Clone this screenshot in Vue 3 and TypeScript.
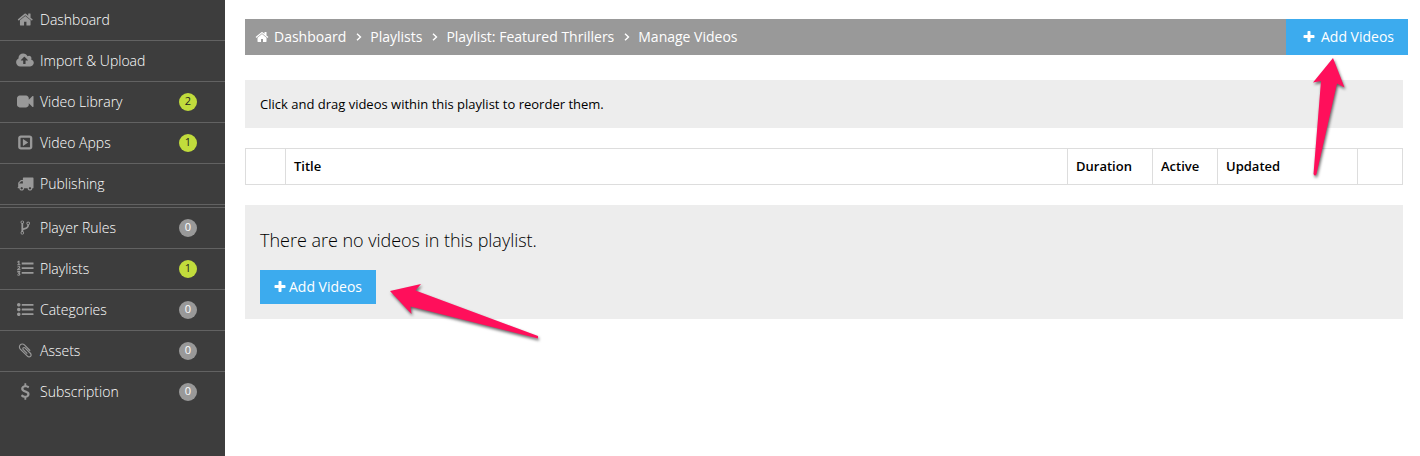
<script setup lang="ts">
type IconName =
  | 'home' | 'cloud' | 'camera' | 'play' | 'truck' | 'fork'
  | 'numbers' | 'list' | 'clip' | 'dollar' | 'plus'

interface NavItem {
  label: string
  icon: IconName
  count?: number
  gapAfter?: boolean
}

const paths: Record<IconName, string> = {
  home: 'M1472 992v480q0 26-19 45t-45 19h-384v-384h-256v384h-384q-26 0-45-19t-19-45v-480q0-1 .5-3t.5-3l575-474 575 474q1 2 1 6zm223-69l-62 74q-8 9-21 11h-3q-13 0-21-7l-692-577-692 577q-12 8-24 7-13-2-21-11l-62-74q-8-10-7-23.5t11-21.5l719-599q32-26 76-26t76 26l244 204v-195q0-14 9-23t23-9h192q14 0 23 9t9 23v408l219 182q10 8 11 21.5t-7 23.5z',
  cloud: 'M1216 864q0-14-9-23l-352-352q-9-9-23-9t-23 9l-351 351q-10 12-10 24 0 14 9 23t23 9h224v352q0 13 9.500 22.500t22.500 9.500h192q13 0 22.500-9.500t9.500-22.500v-352h224q13 0 22.500-9.500t9.500-22.500zm640 288q0 159-112.500 271.500t-271.500 112.500h-1088q-185 0-316.500-131.500t-131.500-316.500q0-130 70-240t188-165q-2-30-2-43 0-212 150-362t362-150q156 0 285.500 87t188.500 231q71-62 166-62 106 0 181 75t75 181q0 76-41 138 130 31 213.500 135.500t83.500 238.500z',
  camera: 'M1792 352v1088q0 42-39 59-13 5-25 5-27 0-45-19l-403-403v166q0 119-84.500 203.500t-203.500 84.500h-704q-119 0-203.500-84.500t-84.500-203.500v-704q0-119 84.500-203.500t203.500-84.500h704q119 0 203.500 84.500t84.500 203.500v165l403-402q18-19 45-19 12 0 25 5 39 17 39 59z',
  play: 'M690 530L1180 860Q1215 896 1180 932L690 1262Q640 1290 640 1230V562Q640 502 690 530zM1408 1376V416q0-32-32-32H416q-32 0-32 32v960q0 32 32 32h960q32 0 32-32zm256-960v960q0 119-84.500 203.500t-203.500 84.500H416q-119 0-203.500-84.500T128 1376V416q0-119 84.500-203.500T416 128h960q119 0 203.500 84.500T1664 416z',
  truck: 'M640 1408q0-52-38-90t-90-38-90 38-38 90 38 90 90 38 90-38 38-90zm-384-512h384v-256h-158q-13 0-22 9l-195 195q-9 9-9 22v30zm1280 512q0-52-38-90t-90-38-90 38-38 90 38 90 90 38 90-38 38-90zm256-1088v1024q0 15-4 26.500t-13.500 18.500-16.500 11.500-23.500 6-22.500 2-25.500 0-22.500-.5q0 106-75 181t-181 75-181-75-75-181h-384q0 106-75 181t-181 75-181-75-75-181h-64q-3 0-22.500.5t-25.500 0-22.500-2-23.500-6-16.500-11.500-13.500-18.500-4-26.500q0-26 19-45t45-19v-320q0-8-.5-35t0-38 2.500-34.500 6.500-37 14-30.500 22.500-30l198-198q19-19 50.500-32t58.500-13h160v-192q0-26 19-45t45-19h1024q26 0 45 19t19 45z',
  fork: 'M672 1472q0-40-28-68t-68-28-68 28-28 68 28 68 68 28 68-28 28-68zm0-1152q0-40-28-68t-68-28-68 28-28 68 28 68 68 28 68-28 28-68zm640 128q0-40-28-68t-68-28-68 28-28 68 28 68 68 28 68-28 28-68zm96 0q0 52-26 96.500t-70 69.500q-2 287-226 414-67 38-203 81-128 40-169.500 71t-41.500 100v26q44 25 70 69.500t26 96.500q0 80-56 136t-136 56-136-56-56-136q0-52 26-96.500t70-69.500v-820q-44-25-70-69.500t-26-96.500q0-80 56-136t136-56 136 56 56 136q0 52-26 96.500t-70 69.500v497q54-26 154-57 55-17 87.500-29.500t70.500-31 59-39.500 40.500-51 28-69.500 8.500-91.500q-44-25-70-69.500t-26-96.500q0-80 56-136t136-56 136 56 56 136z',
  numbers: 'M512 256h1280v192H512zM512 768h1280v192H512zM512 1280h1280v192H512zM10 190L150 60H270V430H370V530H30V430H140V210L70 260zM20 720Q80 620 200 620Q360 620 360 750Q360 830 180 980H270V910H375V1080H10V980Q220 820 230 760Q230 715 185 715Q130 715 90 780zM30 1180H360V1270L270 1380Q375 1410 375 1520Q375 1680 190 1680Q80 1680 5 1610L65 1520Q120 1570 180 1570Q245 1570 245 1515Q245 1450 130 1465L100 1400L190 1280H130V1330H30z',
  list: 'M384 1408q0 80-56 136t-136 56-136-56-56-136 56-136 136-56 136 56 56 136zm0-512q0 80-56 136t-136 56-136-56-56-136 56-136 136-56 136 56 56 136zm0-512q0 80-56 136t-136 56-136-56-56-136 56-136 136-56 136 56 56 136zM544 288h1216q32 0 32 32v128q0 32-32 32H544q-32 0-32-32V320q0-32 32-32zm0 512h1216q32 0 32 32v128q0 32-32 32H544q-32 0-32-32V832q0-32 32-32zm0 512h1216q32 0 32 32v128q0 32-32 32H544q-32 0-32-32v-128q0-32 32-32z',
  clip: 'M1596 1385q0 117-79 196t-196 79q-135 0-235-100l-777-776q-113-115-113-271 0-159 110-270t269-111q158 0 273 113l605 606q10 10 10 22 0 16-30.500 46.500t-46.500 30.500q-13 0-23-10l-606-607q-79-77-181-77-106 0-179 75t-73 181q0 105 76 181l776 777q63 63 145 63 64 0 106-42t42-106q0-82-63-145l-581-581q-26-24-60-24-29 0-48 19t-19 48q0 32 25 59l410 410q10 10 10 22 0 16-31 47t-47 31q-12 0-22-10l-410-410q-63-61-63-149 0-82 57-139t139-57q88 0 149 63l581 581q100 98 100 235z',
  dollar: 'M1362 1185q0 153-99.500 263.500t-258.500 136.500v175q0 14-9 23t-23 9h-135q-13 0-22.500-9.500t-9.500-22.500v-175q-66-9-127.500-31t-101.500-44.500-74-48-46.500-37.500-17.500-18q-17-21-2-41l103-135q7-10 23-12 15-2 24 9l2 2q113 99 243 125 37 8 74 8 81 0 142.500-43t61.500-122q0-28-15-53t-33.500-42-58.500-37.500-66-32-80-32.500q-39-16-61.500-25t-61.500-26.500-62.500-31-56.500-35.500-53.500-42.500-43.500-49-35.500-58-21-66.500-8.500-78q0-138 98-242t255-134v-180q0-13 9.500-22.500t22.500-9.500h135q14 0 23 9t9 23v176q57 6 110.500 23t87 33.500 63.500 37.500 39 29 15 14q17 18 5 38l-81 146q-8 15-23 16-14 3-27-7-3-3-14.500-12t-39-26.500-58.500-32-74.500-26-85.500-11.500q-95 0-155 43t-60 111q0 26 8.500 48t29.500 41.500 39.500 33 56 31 60.500 27 70 27.500q53 20 81 31.500t76 35 75.500 42.500 62 50 53 63.500 31.500 76.500 13 94z',
  plus: 'M1600 736v192q0 40-28 68t-68 28h-416v416q0 40-28 68t-68 28h-192q-40 0-68-28t-28-68v-416h-416q-40 0-68-28t-28-68v-192q0-40 28-68t68-28h416v-416q0-40 28-68t68-28h192q40 0 68 28t28 68v416h416q40 0 68 28t28 68z',
}

const nav: NavItem[] = [
  { label: 'Dashboard', icon: 'home' },
  { label: 'Import & Upload', icon: 'cloud' },
  { label: 'Video Library', icon: 'camera', count: 2 },
  { label: 'Video Apps', icon: 'play', count: 1 },
  { label: 'Publishing', icon: 'truck', gapAfter: true },
  { label: 'Player Rules', icon: 'fork', count: 0 },
  { label: 'Playlists', icon: 'numbers', count: 1 },
  { label: 'Categories', icon: 'list', count: 0 },
  { label: 'Assets', icon: 'clip', count: 0 },
  { label: 'Subscription', icon: 'dollar', count: 0 },
]

const crumbs: string[] = ['Dashboard', 'Playlists', 'Playlist: Featured Thrillers', 'Manage Videos']
const columns: string[] = ['', 'Title', 'Duration', 'Active', 'Updated', '']
</script>

<template>
  <div class="page">
    <nav class="sidebar">
      <a v-for="item in nav" :key="item.label" class="item" :class="{ gap: item.gapAfter }">
        <svg class="icon" :viewBox="item.icon === 'cloud' ? '32 0 1792 1792' : '0 0 1792 1792'">
          <path :d="paths[item.icon]" fill-rule="evenodd" />
        </svg>
        <span class="label">{{ item.label }}</span>
        <span v-if="item.count !== undefined" class="badge" :class="{ active: item.count > 0 }">{{ item.count }}</span>
      </a>
    </nav>

    <main class="main">
      <header class="bar">
        <div class="crumbs">
          <svg class="home" viewBox="0 0 1792 1792"><path :d="paths.home" /></svg>
          <template v-for="(crumb, i) in crumbs" :key="crumb">
            <svg v-if="i > 0" class="chev" viewBox="0 0 6 8"><path d="M1 .7L4.500 4L1 7.300" /></svg>
            <a>{{ crumb }}</a>
          </template>
        </div>
        <button class="add top"><svg viewBox="0 0 1792 1792"><path :d="paths.plus" /></svg><span>Add Videos</span></button>
      </header>

      <p class="notice">Click and drag videos within this playlist to reorder them.</p>

      <div class="table">
        <div v-for="(column, i) in columns" :key="i" class="th">{{ column }}</div>
      </div>

      <section class="empty">
        <h4>There are no videos in this playlist.</h4>
        <button class="add"><svg viewBox="0 0 1792 1792"><path :d="paths.plus" /></svg><span>Add Videos</span></button>
      </section>
    </main>

    <svg class="arrows" viewBox="0 0 1420 456">
      <path d="M1333 58L1344.500 87.500L1337 83.500L1316.500 174Q1315 177 1313.500 174L1321 81L1313 82.500z" />
      <path d="M390 291L421 284L415.500 290.500L538 336V338.500L410.500 306.500L411.500 314z" />
    </svg>
  </div>
</template>

<style>
body {
  background: #fff;
  overflow: hidden;
}
</style>

<style scoped>
.page {
  position: relative;
  display: flex;
  height: 456px;
  font-family: "Open Sans", "Noto Sans", sans-serif;
  font-size: 14px;
  color: #000;
}
.sidebar {
  flex: none;
  width: 225px;
  background: #3d3d3d;
}
.item {
  display: flex;
  align-items: center;
  box-sizing: border-box;
  height: 41px;
  padding: 0 28px 1px 17px;
  border-bottom: 1px solid #626262;
  color: #fff;
}
.item:last-child {
  border-bottom-color: transparent;
}
.item.gap {
  margin-bottom: 2px;
}
.item.gap + .item {
  height: 42px;
  border-top: 1px solid #626262;
}
.icon {
  width: 16.500px;
  height: 17px;
  margin-right: 6.500px;
  overflow: visible;
  fill: #999;
}
.label {
  flex: 1;
  font-weight: 300;
  line-height: 20px;
}
.badge {
  width: 18px;
  height: 18px;
  border-radius: 50%;
  background: #999;
  color: #fff;
  font-size: 11px;
  line-height: 16px;
  text-align: center;
}
.badge.active {
  background: #c1dc3c;
  color: #222;
}
.main {
  flex: 1;
  padding: 19px 17px 0 20px;
}
.bar {
  display: flex;
  justify-content: space-between;
  height: 36px;
  margin-right: -5px;
  background: #999;
  color: #fff;
}
.crumbs {
  display: flex;
  align-items: center;
  padding: 0 0 1px 10px;
}
.home {
  width: 14px;
  height: 14px;
  margin-right: 5px;
  fill: #fff;
}
.chev {
  width: 6px;
  height: 8px;
  margin: 1px 8.200px 0 9.800px;
  fill: none;
  stroke: #fff;
  stroke-width: 1.4;
}
.add {
  display: flex;
  align-items: center;
  justify-content: center;
  width: 116px;
  height: 34px;
  padding: 0 1px 1px 0;
  border: 0;
  background: #3cabee;
  color: #fff;
  font: inherit;
}
.add svg {
  width: 14px;
  height: 14px;
  margin-right: 2px;
  fill: #fff;
}
.add.top {
  width: 122px;
  height: 36px;
  padding: 0 0 1px 2px;
}
.add.top svg {
  margin-right: 5px;
}
.notice {
  box-sizing: border-box;
  height: 48px;
  margin: 25px 0 20px;
  padding-left: 15px;
  background: #ededed;
  font-size: 13px;
  line-height: 48px;
}
.table {
  display: grid;
  grid-template-columns: 39px 782px 85px 65px 140px 1fr;
  box-sizing: border-box;
  height: 37px;
  border: 1px solid #ddd;
}
.th {
  padding-left: 8px;
  font-size: 13px;
  font-weight: 600;
  line-height: 35px;
}
.th + .th {
  border-left: 1px solid #ddd;
}
.empty {
  box-sizing: border-box;
  height: 114px;
  margin-top: 20px;
  padding: 23px 15px 0;
  background: #ededed;
}
.empty h4 {
  margin: 0 0 18px;
  font-size: 18px;
  font-weight: 300;
  line-height: 24px;
  letter-spacing: -0.02px;
}
.arrows {
  position: absolute;
  inset: 0;
  width: 1420px;
  height: 456px;
  fill: #ff0f5b;
  filter: drop-shadow(1px 2px 1.500px rgba(0, 0, 0, 0.6));
  pointer-events: none;
}
</style>
